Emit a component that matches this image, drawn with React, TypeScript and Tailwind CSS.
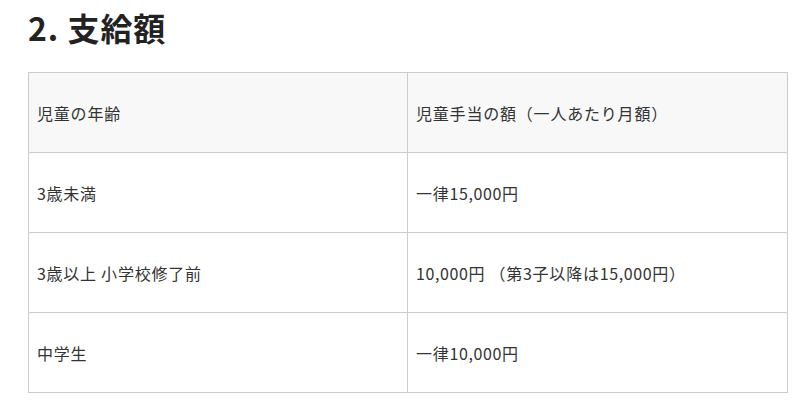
import React from "react";

const rows: [string, string][] = [
  ["3歳未満", "一律15,000円"],
  ["3歳以上 小学校修了前", "10,000円 （第3子以降は15,000円）"],
  ["中学生", "一律10,000円"],
];

function Mixed({ text }: { text: string }) {
  const parts = text.match(/[\x00-\x7f]+|[^\x00-\x7f]+/g) || [];
  return (
    <>
      {parts.map((p, i) =>
        /^[\x00-\x7f]+$/.test(p) ? (
          <span key={i} className="tracking-[0.6px]">
            {p}
          </span>
        ) : (
          <span key={i} className="tracking-[0.8px]">
            {p}
          </span>
        )
      )}
    </>
  );
}

export default function App() {
  return (
    <div
      className="w-[798px] h-[402px] bg-white overflow-hidden px-[28px] pt-[5px]"
      style={{ fontFamily: '"Noto Sans CJK JP", "Noto Sans", sans-serif' }}
    >
      <h2 className="text-[32px] font-bold text-[#222] leading-[44px] h-[67px] tracking-[0.03em]">
        2. 支給額
      </h2>
      <table className="w-[759px] border-collapse table-fixed text-[16px] text-[#333]">
        <colgroup>
          <col className="w-[379px]" />
          <col className="w-[380px]" />
        </colgroup>
        <thead>
          <tr className="bg-[#f8f8f8] h-[80px]">
            <th className="border border-[#cccccc] px-[8px] text-left font-normal">
              <Mixed text="児童の年齢" />
            </th>
            <th className="border border-[#cccccc] px-[8px] text-left font-normal">
              <Mixed text="児童手当の額（一人あたり月額）" />
            </th>
          </tr>
        </thead>
        <tbody>
          {rows.map(([a, b]) => (
            <tr key={a} className="h-[80px]">
              <td className="border border-[#cccccc] px-[8px]">
                <Mixed text={a} />
              </td>
              <td className="border border-[#cccccc] px-[8px]">
                <Mixed text={b} />
              </td>
            </tr>
          ))}
        </tbody>
      </table>
    </div>
  );
}
